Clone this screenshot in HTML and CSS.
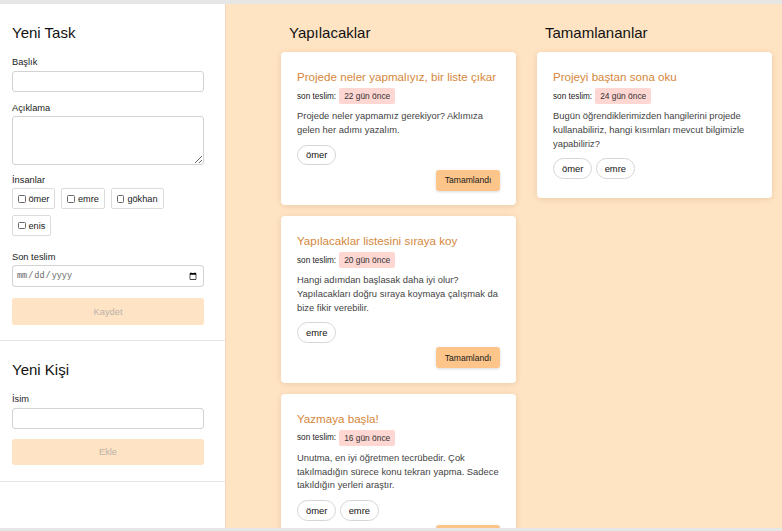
FILE: index.html
```html
<!DOCTYPE html>
<html lang="tr">
<head>
<meta charset="utf-8">
<title>Task Board</title>
<link rel="stylesheet" href="styles.css">
</head>
<body>
<div class="app">
  <aside class="sidebar">
    <section class="panel">
      <h2 class="panel-title">Yeni Task</h2>
      <label class="field-label">Başlık</label>
      <input class="text-input" type="text">
      <label class="field-label gap-after-input">Açıklama</label>
      <textarea class="text-area"></textarea>
      <div class="field-label gap-after-area">İnsanlar</div>
      <div class="people">
        <label class="person"><input type="checkbox" class="check">ömer</label>
        <label class="person"><input type="checkbox" class="check">emre</label>
        <label class="person"><input type="checkbox" class="check">gökhan</label>
        <label class="person"><input type="checkbox" class="check">enis</label>
      </div>
      <label class="field-label gap-after-people">Son teslim</label>
      <input class="date-input" type="date">
      <button class="submit" disabled>Kaydet</button>
    </section>
    <section class="panel">
      <h2 class="panel-title">Yeni Kişi</h2>
      <label class="field-label">İsim</label>
      <input class="text-input" type="text">
      <button class="submit" disabled>Ekle</button>
    </section>
  </aside>

  <main class="board">
    <div class="column">
      <h2 class="column-title">Yapılacaklar</h2>
      <div class="card-list">
        <article class="card">
          <h3 class="card-title">Projede neler yapmalıyız, bir liste çıkar</h3>
          <div class="due"><span class="due-label">son teslim:</span><span class="badge">22 gün önce</span></div>
          <p class="card-desc">Projede neler yapmamız gerekiyor? Aklımıza gelen her adımı yazalım.</p>
          <div class="tags"><span class="tag">ömer</span></div>
          <div class="card-footer"><button class="done-btn">Tamamlandı</button></div>
        </article>
        <article class="card">
          <h3 class="card-title">Yapılacaklar listesini sıraya koy</h3>
          <div class="due"><span class="due-label">son teslim:</span><span class="badge">20 gün önce</span></div>
          <p class="card-desc">Hangi adımdan başlasak daha iyi olur? Yapılacakları doğru sıraya koymaya çalışmak da bize fikir verebilir.</p>
          <div class="tags"><span class="tag">emre</span></div>
          <div class="card-footer"><button class="done-btn">Tamamlandı</button></div>
        </article>
        <article class="card">
          <h3 class="card-title">Yazmaya başla!</h3>
          <div class="due"><span class="due-label">son teslim:</span><span class="badge">16 gün önce</span></div>
          <p class="card-desc">Unutma, en iyi öğretmen tecrübedir. Çok takılmadığın sürece konu tekrarı yapma. Sadece takıldığın yerleri araştır.</p>
          <div class="tags"><span class="tag">ömer</span><span class="tag">emre</span></div>
          <div class="card-footer"><button class="done-btn">Tamamlandı</button></div>
        </article>
      </div>
    </div>
    <div class="column">
      <h2 class="column-title">Tamamlananlar</h2>
      <div class="card-list">
        <article class="card">
          <h3 class="card-title">Projeyi baştan sona oku</h3>
          <div class="due"><span class="due-label">son teslim:</span><span class="badge">24 gün önce</span></div>
          <p class="card-desc">Bugün öğrendiklerimizden hangilerini projede kullanabiliriz, hangi kısımları mevcut bilgimizle yapabiliriz?</p>
          <div class="tags"><span class="tag">ömer</span><span class="tag">emre</span></div>
          <div class="card-footer"></div>
        </article>
      </div>
    </div>
  </main>
</div>
</body>
</html>
```

FILE: styles.css
```css
* { box-sizing: border-box; }

html, body {
  margin: 0;
  padding: 0;
}

body {
  background: #e6e6e6;
  font-family: "Liberation Sans", Arial, sans-serif;
  color: #1a1a1a;
}

.app {
  margin-top: 4px;
  height: 524px;
  display: flex;
  overflow: hidden;
  background: #ffe4c4;
}

/* Sidebar */
.sidebar {
  width: 226px;
  flex: none;
  background: #ffffff;
  border-right: 1px solid #f3d8bb;
}

.panel {
  display: flex;
  flex-direction: column;
  align-items: flex-start;
  padding: 18.5px 21px 15.5px 12px;
  border-bottom: 1px solid #e4e4e4;
}

.panel-title {
  margin: 0 0 13.5px;
  font-size: 15px;
  line-height: 20px;
  font-weight: 400;
  color: #111;
}

.field-label {
  display: block;
  font-size: 9.3px;
  line-height: 12px;
  color: #222;
  margin-bottom: 2.5px;
}

.gap-after-input { margin-top: 10px; }
.gap-after-area { margin-top: 9px; margin-bottom: 2.3px; }
.gap-after-people { margin-top: 14.8px; margin-bottom: 2.5px; }

.text-input {
  width: 192px;
  height: 21px;
  border: 1px solid #d3d3d3;
  border-radius: 3px;
  background: #fff;
  padding: 0 6px;
  font: inherit;
  font-size: 9.5px;
  outline: none;
}

.text-area {
  width: 192px;
  height: 49px;
  border: 1px solid #d3d3d3;
  border-radius: 3px;
  background: #fff;
  padding: 4px 6px;
  font: inherit;
  font-size: 9.5px;
  resize: vertical;
  outline: none;
}

.people {
  width: 192px;
  display: flex;
  flex-wrap: wrap;
  gap: 5.8px 6px;
}

.person {
  display: flex;
  align-items: center;
  height: 21px;
  padding: 0 5px;
  border: 1px solid #dcdcdc;
  border-radius: 2px;
  font-size: 9.2px;
  color: #1a1a1a;
}

.check {
  appearance: none;
  -webkit-appearance: none;
  width: 7.5px;
  height: 7.5px;
  margin: 0 3px 0 0;
  border: 1px solid #6a6a6a;
  border-radius: 1.5px;
  background: #fff;
}

.date-input {
  width: 192px;
  height: 22px;
  border: 1px solid #d3d3d3;
  border-radius: 3px;
  background: #fff;
  padding: 0 4px 0 3px;
  font-family: "Liberation Mono", monospace;
  font-size: 8.5px;
  color: #666;
  outline: none;
}

.submit {
  margin-top: 11px;
  width: 192px;
  height: 26.4px;
  border: none;
  border-radius: 3px;
  background: #fee3c5;
  color: #bdb2a8;
  font-family: inherit;
  font-size: 9.3px;
}

.panel .text-input + .submit { margin-top: 10px; }

/* Board */
.board {
  flex: 1;
  display: flex;
  align-items: flex-start;
  gap: 21px;
  padding: 18.5px 0 0 55px;
}

.column {
  width: 235px;
  flex: none;
}

.column-title {
  margin: 0 0 9.5px 8px;
  font-size: 15px;
  line-height: 20px;
  font-weight: 400;
  color: #111;
}

.card-list {
  display: flex;
  flex-direction: column;
  gap: 11px;
}

.card {
  background: #fff;
  border-radius: 4px;
  padding: 16px 16px 14.5px;
  box-shadow: 0 1px 6px rgba(150, 100, 40, 0.2);
}

.card-title {
  margin: 0;
  font-size: 11.6px;
  line-height: 18px;
  font-weight: 400;
  color: #d4873a;
  white-space: nowrap;
}

.due {
  margin-top: 2px;
  display: flex;
  align-items: center;
  height: 16px;
}

.due-label {
  font-size: 8.2px;
  color: #222;
  margin-right: 3px;
}

.badge {
  display: flex;
  align-items: center;
  height: 16px;
  padding: 0 5px;
  border-radius: 2px;
  background: #fed6d2;
  font-size: 8.4px;
  color: #333;
}

.card-desc {
  margin: 5px 0 0;
  font-size: 9.4px;
  line-height: 13.75px;
  color: #444;
}

.tags {
  margin-top: 8px;
  display: flex;
  gap: 3.3px;
}

.tag {
  display: flex;
  align-items: center;
  height: 20.5px;
  padding: 0 8px;
  border: 1px solid #d6d6d6;
  border-radius: 11px;
  font-size: 9.4px;
  color: #111;
}

.card-footer {
  margin-top: 4.5px;
  display: flex;
  justify-content: flex-end;
}

.done-btn {
  height: 21px;
  padding: 0 8.5px;
  border: none;
  border-radius: 3px;
  background: #fdc58a;
  color: #1a1a1a;
  font-family: inherit;
  font-size: 8.6px;
  box-shadow: 0 1px 3px rgba(0, 0, 0, 0.15);
}
```
